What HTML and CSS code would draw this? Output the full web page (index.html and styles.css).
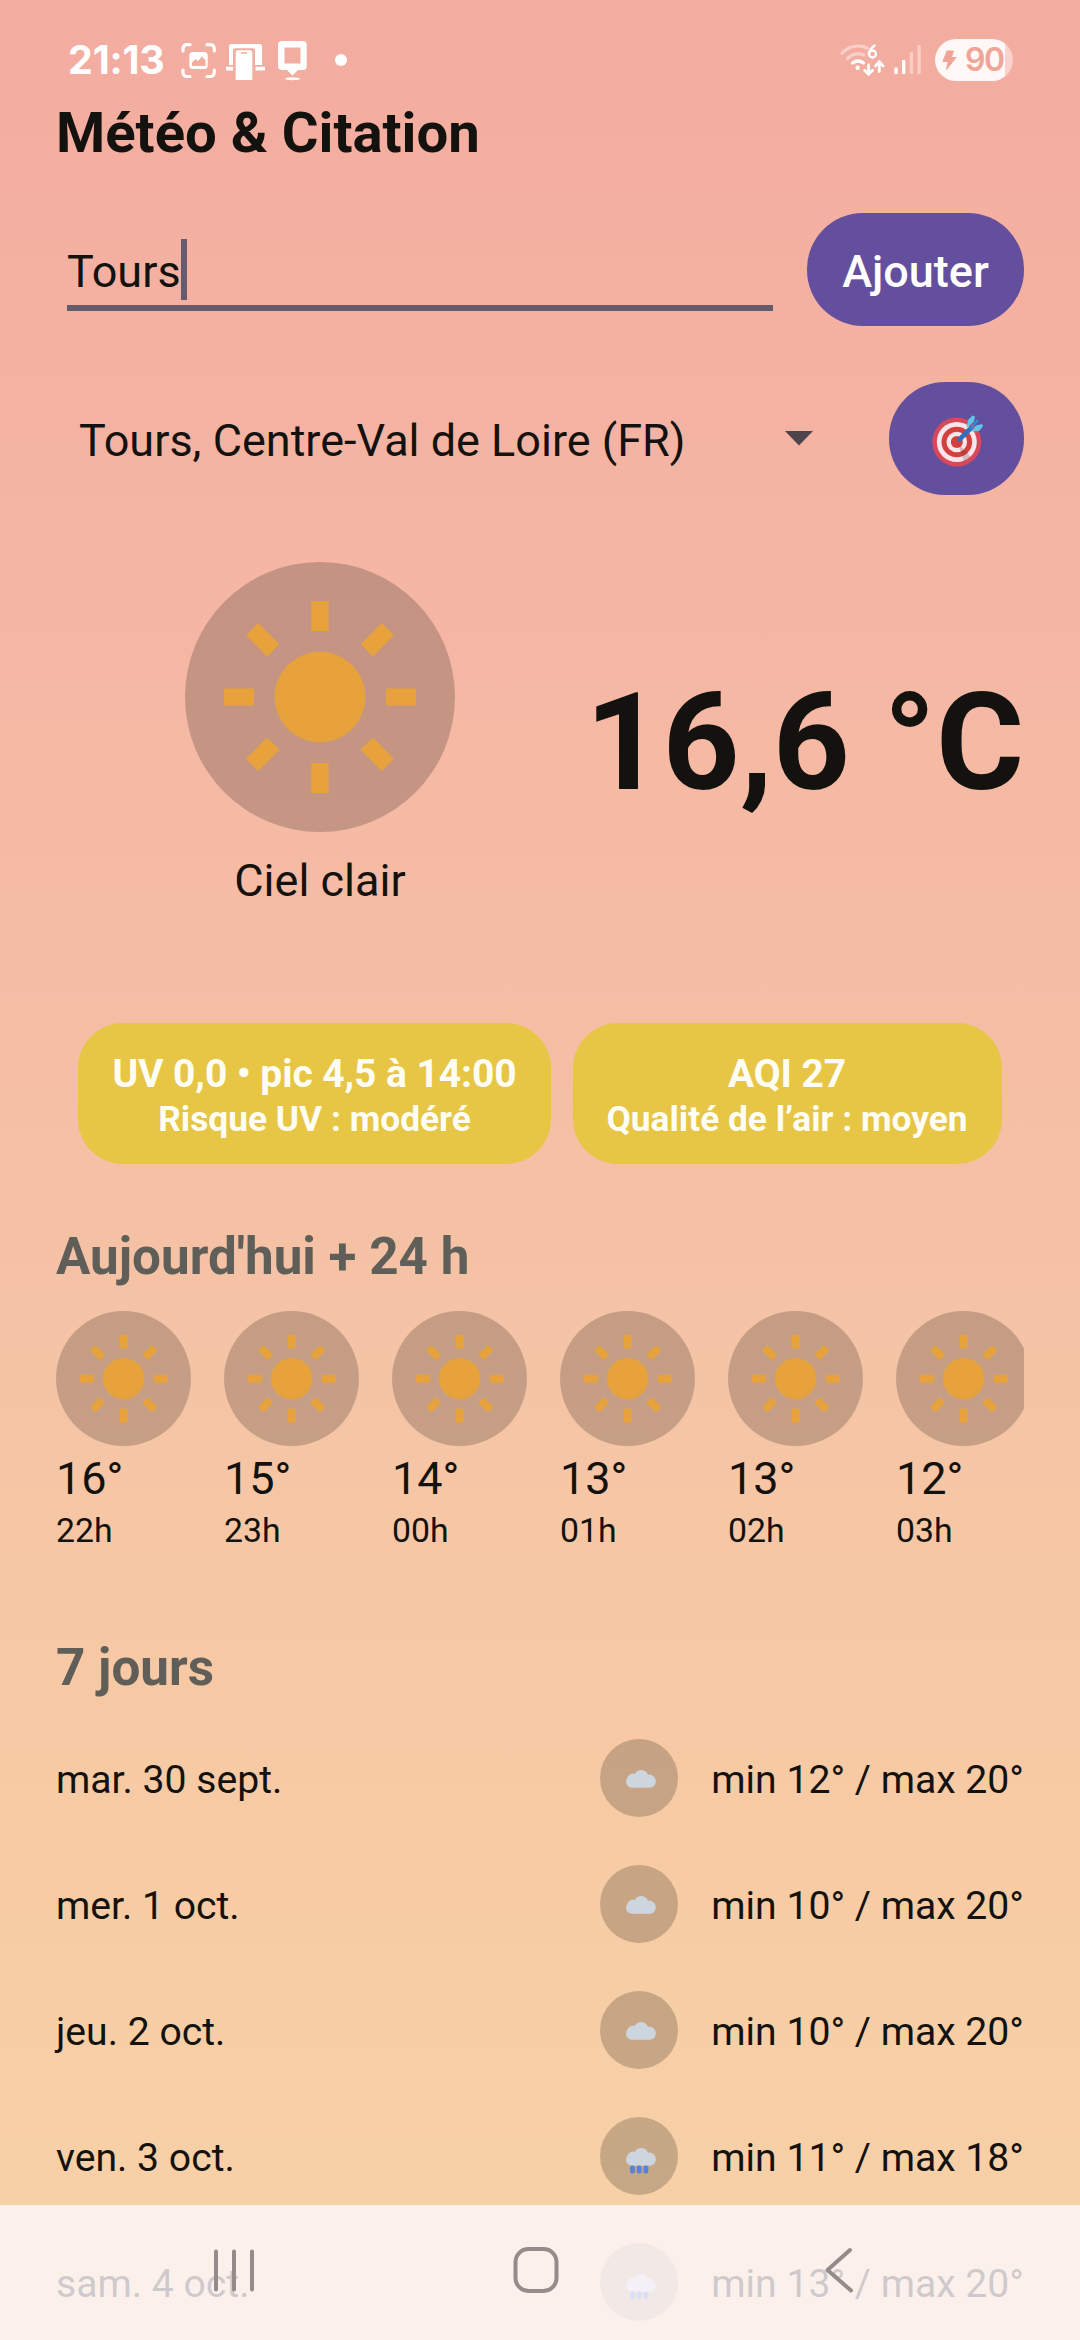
FILE: index.html
```html
<!DOCTYPE html>
<html lang="fr">
<head>
<meta charset="utf-8">
<title>Météo &amp; Citation</title>
<link rel="stylesheet" href="styles.css">
</head>
<body>
<svg class="defs" width="0" height="0">
  <symbol id="sun" viewBox="0 0 270 270">
    <circle cx="135" cy="135" r="45.3"/>
    <path d="M126.4 39h17.2v30h-17.2z"/>
    <path d="M126.4 39h17.2v30h-17.2z" transform="rotate(45 135 135)"/>
    <path d="M126.4 39h17.2v30h-17.2z" transform="rotate(90 135 135)"/>
    <path d="M126.4 39h17.2v30h-17.2z" transform="rotate(135 135 135)"/>
    <path d="M126.4 39h17.2v30h-17.2z" transform="rotate(180 135 135)"/>
    <path d="M126.4 39h17.2v30h-17.2z" transform="rotate(225 135 135)"/>
    <path d="M126.4 39h17.2v30h-17.2z" transform="rotate(270 135 135)"/>
    <path d="M126.4 39h17.2v30h-17.2z" transform="rotate(315 135 135)"/>
  </symbol>
  <symbol id="cloud" viewBox="0 0 78 78">
    <g fill="#cdd5df">
      <rect x="26" y="36.800" width="29.700" height="11.900" rx="5.900"/>
      <circle cx="33.200" cy="40.800" r="6.200"/>
      <circle cx="41.200" cy="38.200" r="7.200"/>
      <circle cx="49.300" cy="41.800" r="6.200"/>
    </g>
  </symbol>
  <symbol id="rain" viewBox="0 0 78 78">
    <use href="#cloud"/>
    <g fill="#5a82d8"><rect x="30" y="48.600" width="4.900" height="8" rx="2"/><rect x="36.700" y="48.600" width="4.900" height="8" rx="2"/><rect x="43.400" y="48.600" width="4.900" height="8" rx="2"/></g>
  </symbol>
</svg>

<div class="screen">
  <header class="status">
    <span class="clock">21:13</span>
    <svg class="notif" width="170" height="44" viewBox="178 38 170 44">
      <g fill="none" stroke="#fff" stroke-width="3.200" stroke-linecap="round">
        <path d="M183 51v-2q0-4.300 4.300-4.300h2.700M207 44.700h2.700q4.600 0 4.600 4.300v2M214.300 70v2q0 4.500-4.600 4.500H207M190 76.500h-2.700q-4.300 0-4.300-4.500v-2"/>
      </g>
      <rect x="189.300" y="52" width="18.400" height="17" rx="3.500" fill="#fff"/>
      <path fill="#f2aca0" d="M192 66v-3.500l3.500-3.500 2.500 2 4-4.500 3.500 3.800V66z"/>
      <path fill="#fff" d="M229 65V46.500q0-2.500 2.500-2.500h28q2.500 0 2.500 2.500V65h-7V50.600q0-2.400-2.600-2.400h-16.800q-2.600 0-2.600 2.400V65z"/>
      <path fill="#fff" d="M226 66.700h7v3.800h-7zM255.500 66.700h9.500v3.800h-9.500zM235.700 80V52.500q0-2.300 2.300-2.300h12q2.300 0 2.300 2.300V80z"/>
      <path stroke="#f2aca0" stroke-width="1.600" stroke-linecap="round" d="M241.500 53h5"/>
      <path fill="#fff" fill-rule="evenodd" d="M282 41h20.700q4 0 4 4v21q0 4-4 4H298l-5.500 5.500L287 70h-5q-4 0-4-4V45q0-4 4-4zM284.500 47.500v16h16v-16z"/>
      <ellipse cx="292.500" cy="78.800" rx="7.500" ry="1.500" fill="#fff"/>
      <circle cx="341" cy="60" r="6" fill="#fff"/>
    </svg>
    <svg class="radio" width="90" height="44" viewBox="838 38 90 44">
      <g fill="none" stroke="#fff" stroke-linecap="round" stroke-width="3.200">
        <path opacity=".42" d="M842 53q7-7 16-7 5.500 0 9 2M847.500 58.500q4.700-4.700 10.300-4.700 3.500 0 6 1.200"/>
        <path d="M852.500 63q5.500-4 11 0"/>
        <path stroke-width="2.800" d="M868.600 65v9m-4-3.700l4 4 4-4M879.300 71.500v-9m-3.800 3.400l3.800-4 3.800 4"/>
      </g>
      <circle cx="857.600" cy="67.800" r="2.200" fill="#fff"/>
      <path fill="none" stroke="#fff" stroke-width="2.400" stroke-linecap="round" d="M874.500 45.500q-5.500 4.500-5.500 8.500"/><circle cx="872.500" cy="54" r="3.500" fill="none" stroke="#fff" stroke-width="2.400"/>
      <g fill="#fff"><rect x="894.300" y="67.600" width="3.400" height="6.400" rx="1"/><rect x="902" y="60" width="3.400" height="14" rx="1"/><rect opacity=".4" x="909.700" y="52" width="3.400" height="22" rx="1"/><rect opacity=".4" x="917.400" y="45" width="3.400" height="29" rx="1"/></g>
    </svg>
    <div class="battery">
      <svg width="15" height="21" viewBox="0 0 15 21"><path fill="#f0a598" stroke="#f0a598" stroke-linejoin="round" d="M5 1h6.500L9.300 7.500H14L4.500 19.500l1.700-8H1z"/></svg>
      <span>90</span>
    </div>
  </header>

  <main class="content">
    <h1>Météo &amp; Citation</h1>

    <div class="row add-row">
      <div class="field"><span>Tours</span><i class="caret"></i></div>
      <button class="btn">Ajouter</button>
    </div>

    <div class="row pick-row">
      <div class="picker"><span>Tours, Centre-Val de Loire (FR)</span>
        <svg width="28" height="15" viewBox="0 0 28 15"><path fill="#4c434b" d="M0 0h28L14 14.500z"/></svg>
      </div>
      <button class="btn target">
        <svg width="52" height="60" viewBox="0 0 52 60">
          <circle cx="25.800" cy="33" r="24.500" fill="#d9475a"/>
          <circle cx="25.800" cy="33" r="20" fill="#f9e6ea"/>
          <circle cx="25.800" cy="33" r="15.300" fill="#d4403f"/>
          <circle cx="25.800" cy="33" r="10.300" fill="#f9e6ea"/>
          <circle cx="25.800" cy="33" r="6" fill="#d4403f"/>
          <path d="M27 34l13 14-7 5z" fill="#7a2c30" opacity=".25"/>
          <path stroke="#2f6fc0" stroke-width="4.600" stroke-linecap="round" d="M28.500 30.500L40 19"/>
          <path stroke="#2f8fd0" stroke-width="2.400" d="M39 20l8-9"/>
          <path fill="#62c4ea" d="M35.500 19L37 11l4.500-4.500 2.500 1-1 5zM40.500 22.500l4.500-6 6-1.500 1 2.500-4 4.500z"/>
        </svg>
      </button>
    </div>

    <section class="now">
      <div class="now-sky">
        <div class="disc disc-xl"><svg class="sun"><use href="#sun"/></svg></div>
        <div class="now-label">Ciel clair</div>
      </div>
      <div class="now-temp">16,6 °C</div>
    </section>

    <section class="badges">
      <div class="badge"><b>UV 0,0 • pic 4,5 à 14:00</b><small>Risque UV : modéré</small></div>
      <div class="badge"><b>AQI 27</b><small>Qualité de l’air : moyen</small></div>
    </section>

    <h2 class="h-hours">Aujourd'hui + 24 h</h2>
    <section class="hours">
      <div class="hour"><div class="disc disc-m"><svg class="sun"><use href="#sun"/></svg></div><span class="t">16°</span><span class="h">22h</span></div>
      <div class="hour"><div class="disc disc-m"><svg class="sun"><use href="#sun"/></svg></div><span class="t">15°</span><span class="h">23h</span></div>
      <div class="hour"><div class="disc disc-m"><svg class="sun"><use href="#sun"/></svg></div><span class="t">14°</span><span class="h">00h</span></div>
      <div class="hour"><div class="disc disc-m"><svg class="sun"><use href="#sun"/></svg></div><span class="t">13°</span><span class="h">01h</span></div>
      <div class="hour"><div class="disc disc-m"><svg class="sun"><use href="#sun"/></svg></div><span class="t">13°</span><span class="h">02h</span></div>
      <div class="hour"><div class="disc disc-m"><svg class="sun"><use href="#sun"/></svg></div><span class="t">12°</span><span class="h">03h</span></div>
    </section>

    <h2 class="h-days">7 jours</h2>
    <section class="days">
      <div class="day"><span class="date">mar. 30 sept.</span><svg class="disc disc-s"><use href="#cloud"/></svg><span class="range">min 12° / max 20°</span></div>
      <div class="day"><span class="date">mer. 1 oct.</span><svg class="disc disc-s"><use href="#cloud"/></svg><span class="range">min 10° / max 20°</span></div>
      <div class="day"><span class="date">jeu. 2 oct.</span><svg class="disc disc-s"><use href="#cloud"/></svg><span class="range">min 10° / max 20°</span></div>
      <div class="day"><span class="date">ven. 3 oct.</span><svg class="disc disc-s"><use href="#rain"/></svg><span class="range">min 11° / max 18°</span></div>
      <div class="day"><span class="date">sam. 4 oct.</span><svg class="disc disc-s"><use href="#rain"/></svg><span class="range">min 13° / max 20°</span></div>
    </section>
  </main>

  <nav class="navbar">
    <svg width="44" height="48" viewBox="0 0 44 48"><path fill="none" stroke="#968b8a" stroke-width="4" stroke-linecap="round" d="M4 5.500v38M22 5.500v38M40 5.500v38"/></svg>
    <svg width="48" height="48" viewBox="0 0 48 48"><rect x="3.500" y="3" width="41" height="42" rx="13" fill="none" stroke="#968b8a" stroke-width="4"/></svg>
    <svg class="back" width="32" height="48" viewBox="0 0 32 48"><path fill="none" stroke="#968b8a" stroke-width="4" stroke-linecap="round" stroke-linejoin="round" d="M27 4L4.500 24 28 44.500"/></svg>
  </nav>
</div>
</body>
</html>
```
FILE: styles.css
```css
* { box-sizing: border-box; }

body {
  margin: 0;
  font-family: Roboto, "Noto Sans", sans-serif;
  color: #14120f;
}

.defs { position: absolute; }

.screen {
  position: relative;
  width: 1080px;
  height: 2340px;
  overflow: hidden;
  background: linear-gradient(#f3aca0 0, #f5b8a4 30%, #f5c3a5 57%, #f7cca4 81%, #f8d2a8 100%);
}

.status {
  display: flex;
  align-items: center;
  height: 100px;
  padding: 20px 67px 0;
  color: #fff;
}

.clock {
  width: 111px;
  padding-left: 1px;
  font: 700 39.500px/44px Inter, sans-serif;
  letter-spacing: -0.2px;
  white-space: nowrap;
}

.radio { margin-left: auto; margin-right: 7px; }

.battery {
  display: flex;
  align-items: center;
  gap: 8px;
  width: 78px;
  height: 42px;
  padding-left: 7px;
  border-radius: 21px;
  background: linear-gradient(90deg, #fff8f6 70.500px, #f9d2ca 70.500px);
  color: #f0a598;
  font: 600 32px/42px Inter, sans-serif;
  letter-spacing: -1.500px;
}

.content { padding: 0 56px; }

h1 { margin: 0; font-size: 56.250px; font-weight: 700; line-height: 66px; }

.row { display: flex; justify-content: space-between; }
.add-row { margin-top: 47px; }
.pick-row { margin-top: 56px; }

.btn {
  height: 113px;
  width: 217px;
  padding: 3px 0 0;
  border: 0;
  border-radius: 56px;
  background: #634f9d;
  color: #fff;
  font: 500 45px/53px Roboto, sans-serif;
}

.btn.target {
  display: flex;
  width: 135px;
  padding: 0;
  align-items: center;
  justify-content: center;
}

.field {
  display: flex;
  align-items: center;
  width: 706px;
  height: 78px;
  margin: 20px 0 0 11px;
  padding-top: 1px;
  border-bottom: 6px solid #665a6d;
  font-size: 45px;
}

.field span { padding-top: 3px; }

.caret { width: 6px; height: 61px; background: #665a6d; }

.picker {
  display: flex;
  justify-content: space-between;
  align-items: center;
  width: 757px;
  padding-left: 23px;
  font-size: 45px;
}

.picker span { padding-top: 3px; }

.now {
  display: flex;
  justify-content: space-between;
  margin-top: 67px;
}

.now-sky {
  display: flex;
  flex-direction: column;
  align-items: center;
  margin-left: 129px;
}

.disc {
  display: flex;
  align-items: center;
  justify-content: center;
  flex: none;
  border-radius: 50%;
  background: rgba(20, 20, 15, 0.21);
}

.disc-xl { width: 270px; height: 270px; }
.disc-m { width: 135px; height: 135px; }
.disc-s { width: 78px; height: 78px; margin-right: 33px; }
.sun { fill: #e8a23b; }
.disc-xl .sun { width: 270px; height: 270px; }
.disc-m .sun { width: 123.400px; height: 123.400px; }

.now-label { margin-top: 22px; font-size: 45px; line-height: 54px; }

.now-temp {
  margin-top: 102px;
  font-size: 134.600px;
  font-weight: 700;
  line-height: 158px;
}

.badges {
  display: flex;
  justify-content: center;
  gap: 22px;
  margin-top: 115px;
}

.badge {
  display: flex;
  flex-direction: column;
  align-items: center;
  height: 141px;
  padding: 28px 34px 0;
  border-radius: 45px;
  background: #e7c545;
  color: #fffef4;
}

.badge b { font-size: 39px; line-height: 47px; letter-spacing: -0.080px; white-space: nowrap; }
.badge small { font-size: 35.300px; font-weight: 700; line-height: 42px; white-space: nowrap; }

h2 { margin: 0; color: #605e59; font-size: 51.200px; font-weight: 700; line-height: 60px; }
.h-hours { margin-top: 63px; }
.h-days { margin-top: 87px; }

.hours {
  display: flex;
  gap: 33px;
  margin-top: 24px;
  overflow: hidden;
}

.hour { display: flex; flex-direction: column; flex: none; width: 135px; }
.hour .t { margin-top: 6px; font-size: 45px; line-height: 53px; }
.hour .h { margin-top: 6px; font-size: 33.750px; line-height: 40px; }

.days { display: flex; flex-direction: column; gap: 48px; margin-top: 41px; }
.day { display: flex; align-items: center; height: 78px; font-size: 39.150px; }
.date { flex: 1; padding-top: 3px; }
.range { padding-top: 3px; }

.navbar {
  position: absolute;
  inset: auto 0 0;
  display: grid;
  grid-template-columns: 44px 48px 40px;
  column-gap: 256px;
  height: 135px;
  padding: 41px 0 0 212px;
  background: rgba(252, 247, 253, 0.8);
}

.back { margin-left: 7px; }
```
